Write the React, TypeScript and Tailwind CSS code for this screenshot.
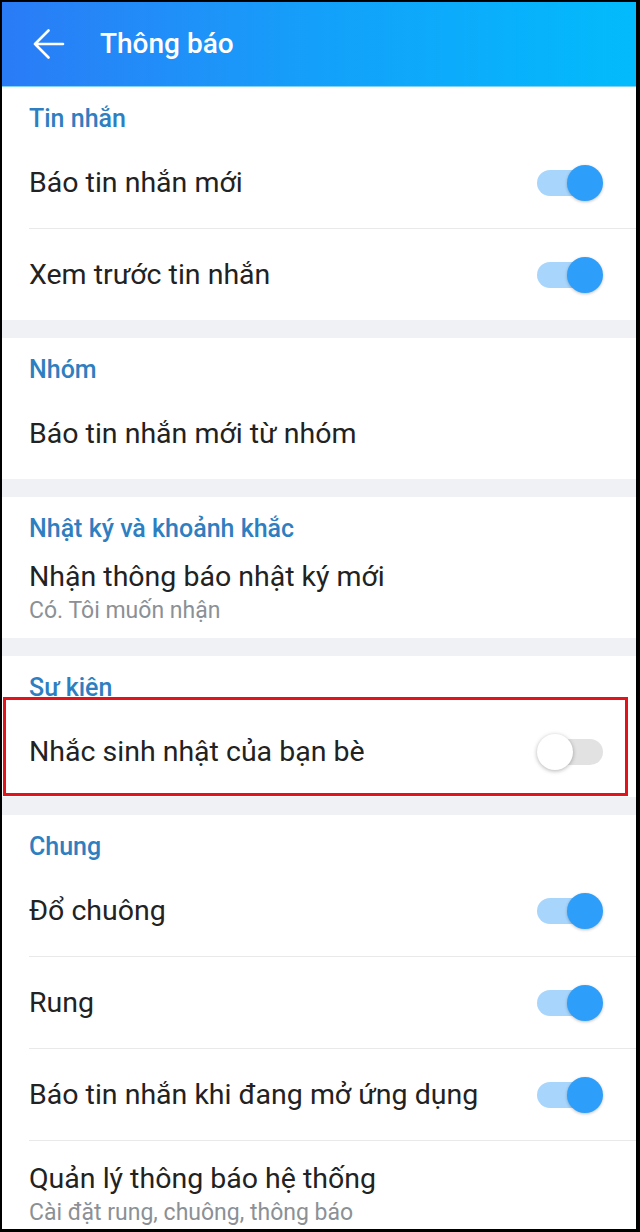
import React from "react";

type Row = {
  title: string;
  sub?: string;
  toggle?: "on" | "off";
};

type Section = {
  label: string;
  rows: Row[];
};

const SECTIONS: Section[] = [
  {
    label: "Tin nhắn",
    rows: [
      { title: "Báo tin nhắn mới", toggle: "on" },
      { title: "Xem trước tin nhắn", toggle: "on" },
    ],
  },
  {
    label: "Nhóm",
    rows: [{ title: "Báo tin nhắn mới từ nhóm" }],
  },
  {
    label: "Nhật ký và khoảnh khắc",
    rows: [{ title: "Nhận thông báo nhật ký mới", sub: "Có. Tôi muốn nhận" }],
  },
  {
    label: "Sự kiện",
    rows: [{ title: "Nhắc sinh nhật của bạn bè", toggle: "off" }],
  },
  {
    label: "Chung",
    rows: [
      { title: "Đổ chuông", toggle: "on" },
      { title: "Rung", toggle: "on" },
      { title: "Báo tin nhắn khi đang mở ứng dụng", toggle: "on" },
      { title: "Quản lý thông báo hệ thống", sub: "Cài đặt rung, chuông, thông báo" },
    ],
  },
];

function Toggle({ on }: { on: boolean }) {
  if (on) {
    return (
      <div className="relative w-[66px] h-[36px] flex items-center shrink-0">
        <div className="w-[60px] h-[26px] rounded-full bg-[#a7d5fc]" />
        <div className="absolute right-0 top-0 w-[36px] h-[36px] rounded-full bg-[#2d9ef9] shadow-[0_1px_3px_rgba(0,0,0,0.25)]" />
      </div>
    );
  }
  return (
    <div className="relative w-[66px] h-[36px] flex items-center justify-end shrink-0">
      <div className="w-[62px] h-[26px] rounded-full bg-[#e2e2e2]" />
      <div className="absolute left-0 top-0 w-[36px] h-[36px] rounded-full bg-white shadow-[0_1px_4px_rgba(0,0,0,0.3)]" />
    </div>
  );
}

function SettingRow({ row, tall }: { row: Row; tall: boolean }) {
  return (
    <div className={`flex items-center pr-[33px] ${tall ? "h-[106px]" : "h-[91px]"}`}>
      <div className="flex-1 flex flex-col min-w-0">
        <span className="text-[28.5px] leading-[34px] text-[#222222]">{row.title}</span>
        {row.sub && (
          <span className="mt-[3px] text-[23px] leading-[28px] text-[#8b9096]">{row.sub}</span>
        )}
      </div>
      {row.toggle && <Toggle on={row.toggle === "on"} />}
    </div>
  );
}

export default function App() {
  return (
    <div
      className="w-[640px] h-[1232px] bg-black pt-[2px] pl-[2px] pr-[4px] pb-[3px] relative"
      style={{ fontFamily: "Roboto, 'Noto Sans', sans-serif" }}
    >
      <div className="w-full h-full bg-[#eff1f4] overflow-hidden flex flex-col">
        <header className="h-[85px] shrink-0 flex items-center bg-linear-to-r from-[#2a7bf6] via-[#13a0fa] to-[#02bbfc] border-b border-[#7fd3fb]">
          <svg
            width="32"
            height="30"
            viewBox="0 0 32 30"
            className="ml-[31px]"
            fill="none"
            stroke="white"
            strokeWidth="2.6"
            strokeLinecap="round"
            strokeLinejoin="round"
          >
            <path d="M2 15H30M15.5 1.5L2 15L15.5 28.5" />
          </svg>
          <span className="ml-[35px] text-[28px] font-medium text-white">Thông báo</span>
        </header>

        <div className="flex flex-col gap-[18px]">
          {SECTIONS.map((s, si) => (
            <section key={s.label} className="bg-white pl-[27px]">
              <div className="h-[50px] pt-[17px]">
                <span className="text-[25px] leading-[30px] font-medium text-[#2e7fc1]">
                  {s.label}
                </span>
              </div>
              {s.rows.map((r, ri) => {
                const last = ri === s.rows.length - 1;
                const tall = si === SECTIONS.length - 1 && last;
                return (
                  <div key={r.title} className={last ? "" : "border-b border-[#e9e9e9]"}>
                    <SettingRow row={r} tall={tall} />
                  </div>
                );
              })}
            </section>
          ))}
        </div>
      </div>

      <div className="absolute left-[3px] top-[697px] w-[625px] h-[99px] border-[3px] border-[#e2131b] pointer-events-none" />
    </div>
  );
}
